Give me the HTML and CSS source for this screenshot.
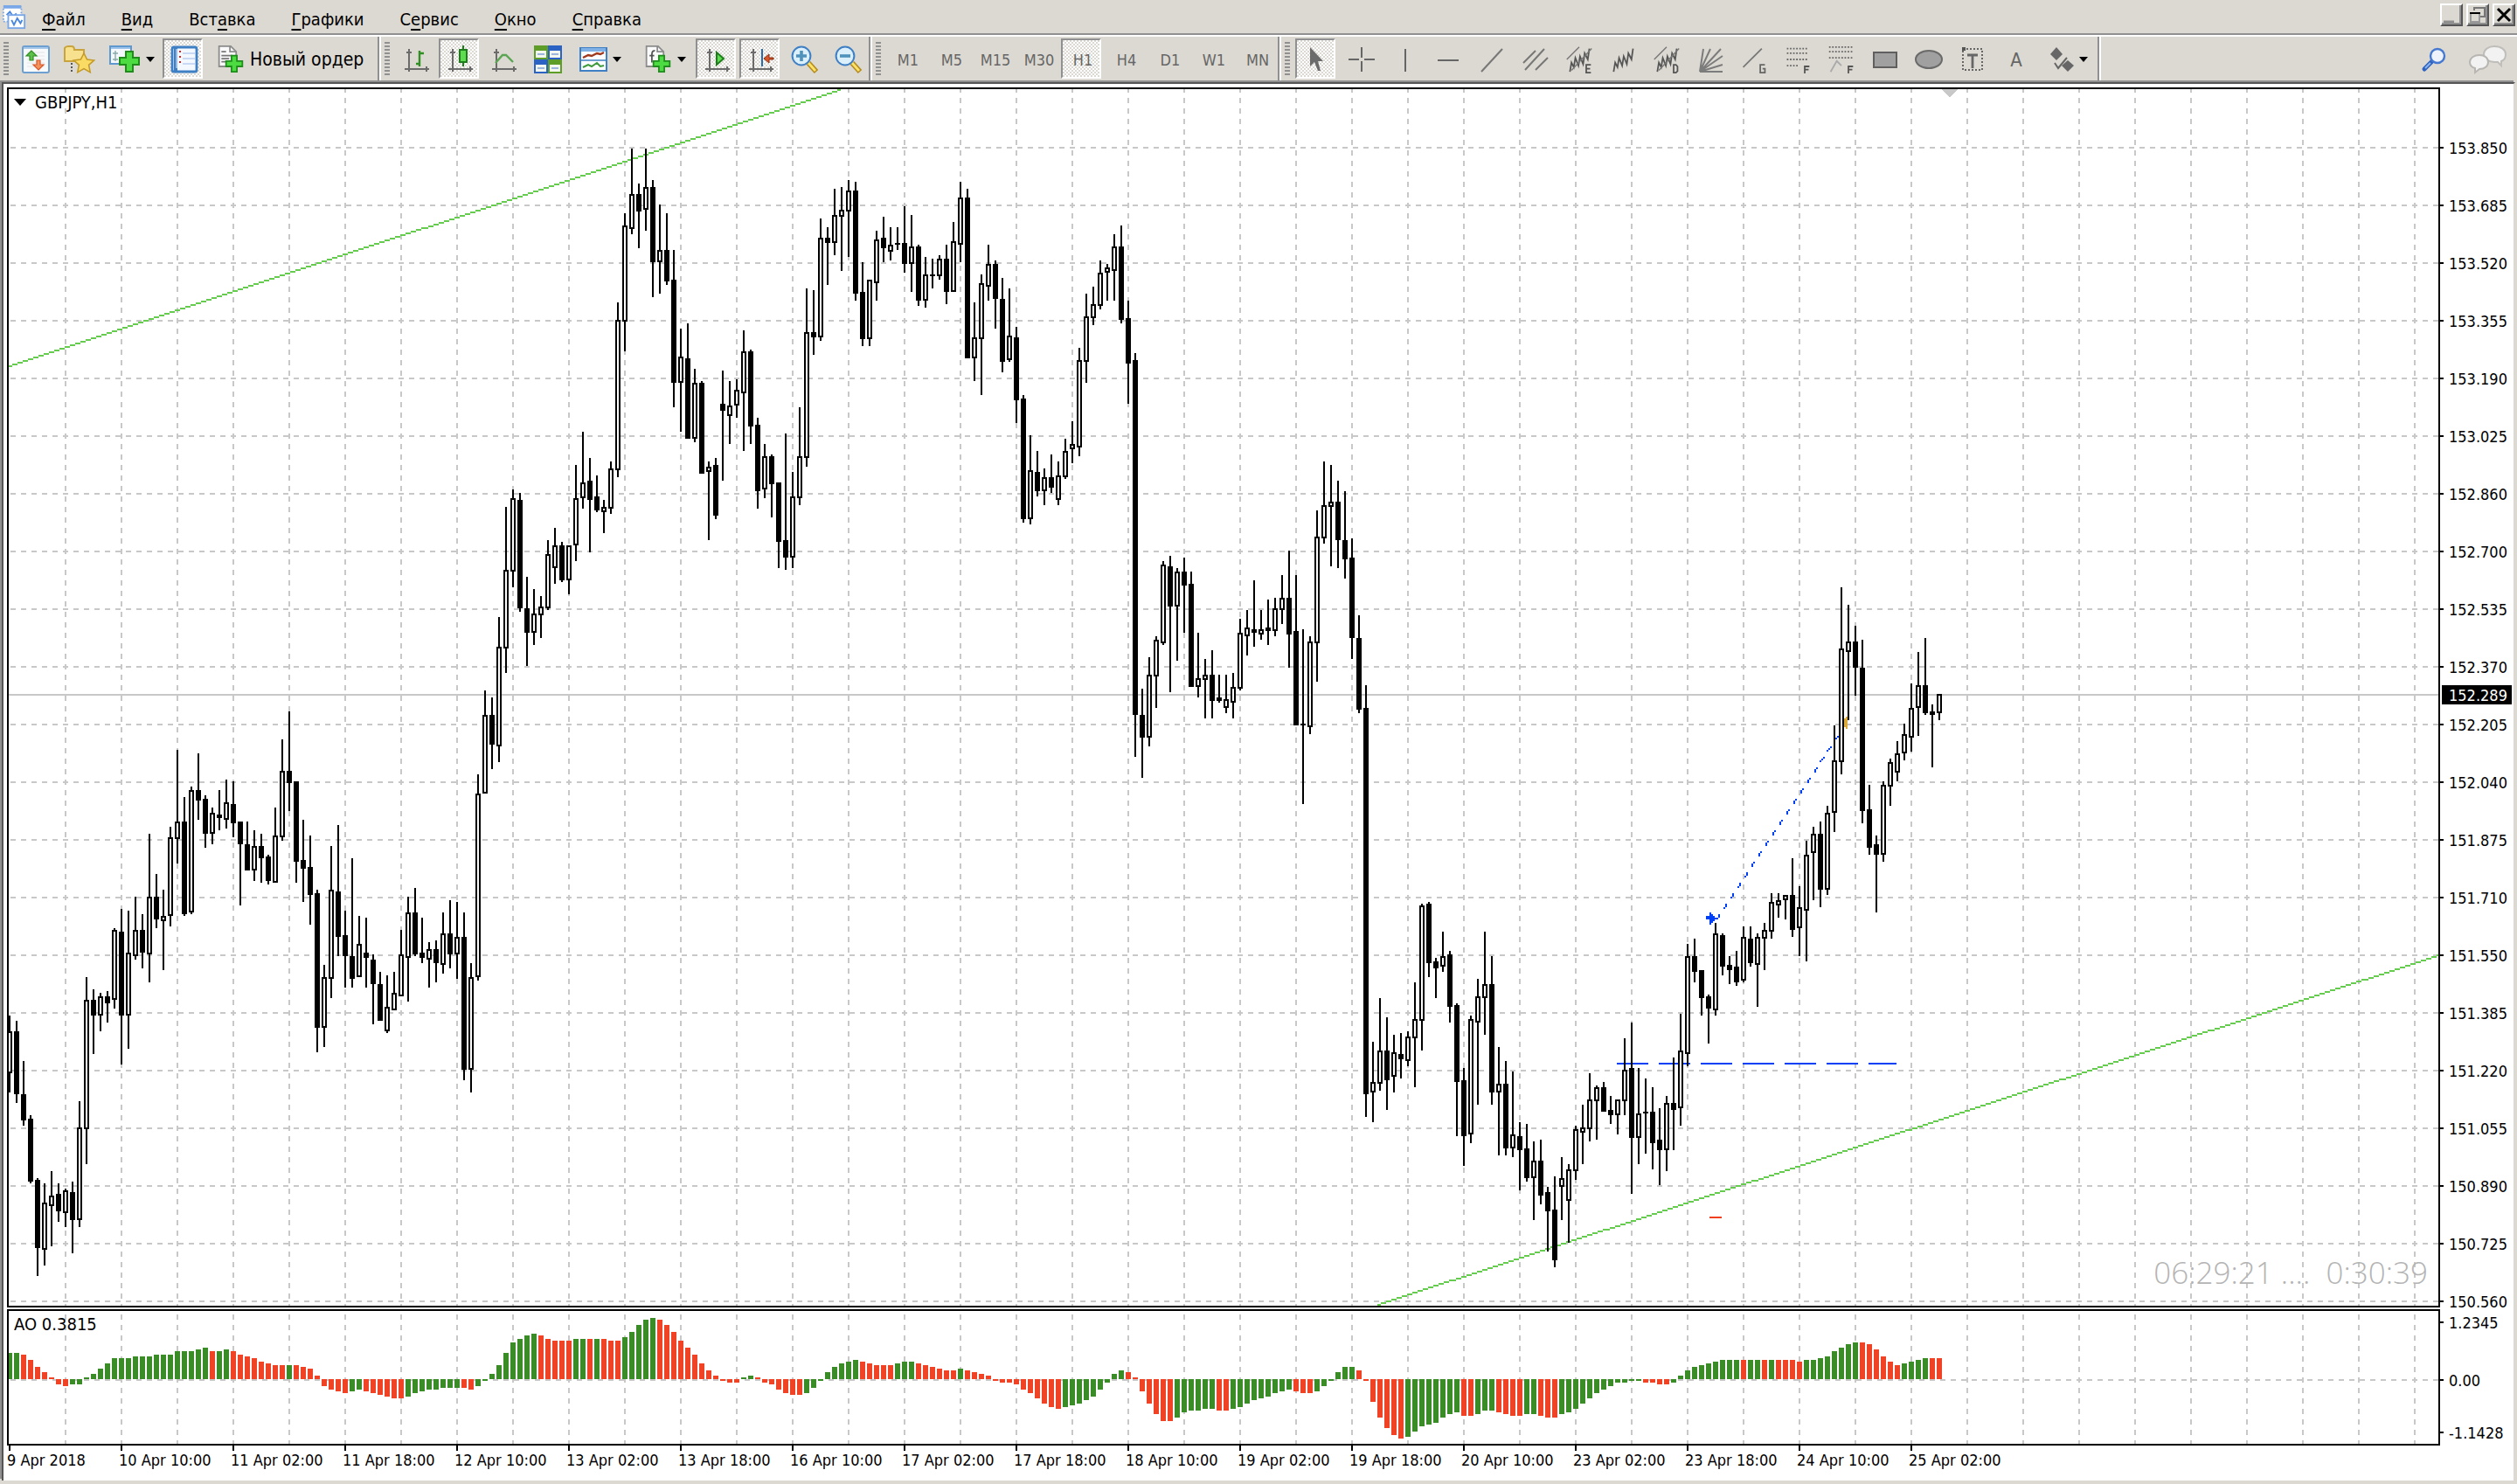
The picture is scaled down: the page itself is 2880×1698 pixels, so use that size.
FILE: index.html
```html
<!DOCTYPE html>
<html lang="ru">
<head>
    <meta charset="UTF-8">
    <meta name="viewport" content="width=device-width, initial-scale=1.0">
    <title>GBPJPY,H1</title>
    <link rel="stylesheet" href="styles.css">
</head>
<body>
    <header class="menubar">
        <svg class="app-icon" viewBox="0 0 15 15">
            <rect x="1" y="1" width="11" height="9" fill="#fff" stroke="#7aa7e8" stroke-dasharray="1 1"/>
            <path d="M1 1h11" stroke="#7aa7e8" stroke-width="2"/>
            <path d="M3 6l2-2 2 3 2-2" stroke="#4b86dd" fill="none"/>
            <rect x="4" y="6" width="10" height="8" fill="#fff" stroke="#7aa7e8"/>
            <path d="M6 9l1.500 3 2-4 2 3 1-2" stroke="#4b86dd" fill="none"/>
        </svg>
        <nav class="menu">
            <button><u>Ф</u>айл</button>
            <button><u>В</u>ид</button>
            <button>Вст<u>а</u>вка</button>
            <button><u>Г</u>рафики</button>
            <button>С<u>е</u>рвис</button>
            <button><u>О</u>кно</button>
            <button><u>С</u>правка</button>
        </nav>
        <div class="window-buttons">
            <button aria-label="Свернуть"><svg viewBox="0 0 11 11"><path d="M1 9.500h6" stroke="#8f8f8f" stroke-width="1.500"/></svg></button>
            <button aria-label="Восстановить"><svg viewBox="0 0 11 11"><path d="M3.500 3V1.500h6v5H7" stroke="#777" fill="none"/><path d="M3 1.500h7" stroke="#777"/><rect x="1.500" y="4.500" width="5" height="5" fill="#dcd9d2" stroke="#999"/><path d="M1 4.500h6" stroke="#000"/></svg></button>
            <button aria-label="Закрыть"><svg viewBox="0 0 11 11"><path d="M2 2l7 7M9 2l-7 7" stroke="#000" stroke-width="1.500"/></svg></button>
        </div>
    </header>

    <div class="toolbar">
        <div class="group">
            <span class="grip"></span>
            <button class="tool" aria-label="Новый график"><svg viewBox="0 0 16 16"><rect x=".5" y=".5" width="15" height="15" rx="1" fill="#f8f9fa" stroke="#6d9fd0"/><path d="M1 1.500h14" stroke="#a8c8ea"/><path d="M3 4h10M3 6h10M3 8h10M3 10h10M3 12h10" stroke="#e2e4e8" stroke-width=".5"/><path d="M5.500 3L2.500 6h2v2.500h2V6h2z" fill="#5fc04c" stroke="#2f8f22" stroke-width=".6"/><path d="M9.500 14l3-3h-2V8.500h-2V11h-2z" fill="#f2925c" stroke="#d8572a" stroke-width=".6"/></svg></button>
            <button class="tool" aria-label="Профили"><svg class="wide" viewBox="0 0 18 16"><path d="M.5 9V1.500Q1 .5 2.500 .5h2Q6 .5 6 2.500h5.500V9z" fill="#f7e08e" stroke="#c9a43c"/><path d="M4.500 10v6" stroke="#555" stroke-dasharray="1 1"/><path d="M11.500 4.500l1.800 3.500 4 .5-3 2.700.8 4.100-3.600-2-3.600 2 .8-4.100-3-2.700 4-.5z" fill="#fadc65" stroke="#c49a28" stroke-width=".8"/></svg></button>
            <button class="tool drop" aria-label="Добавить график"><svg class="wide" viewBox="0 0 18 16"><rect x=".5" y=".5" width="12" height="10" fill="#f4f8fc" stroke="#5f97cf"/><path d="M1 1.500h11" stroke="#9dc3ea"/><path d="M3.500 3v6M2 4.500h3M2 8h3" stroke="#8aa" stroke-width=".7"/><path d="M9.500 3.500h4v3.500h3.500v4h-3.500v4h-4v-4H6V7h3.500z" fill="#4ddb42" stroke="#1f8c1c"/></svg><i class="arrow"></i></button>
            <button class="tool pressed" aria-label="Обзор рынка"><svg viewBox="0 0 16 16"><rect x="1" y="1" width="14" height="14" rx="1" fill="#f4f8ff" stroke="#3f7fc4" stroke-width="1.400"/><path d="M3 1.500v13" stroke="#3f7fc4" stroke-width="2"/><path d="M3.500 2v11" stroke="#a9cbf0" stroke-width=".8"/><path d="M5.500 3v1M5.500 6v1M5.500 9v1" stroke="#d22"/><path d="M7 4.500h7M7 7.500h7M7 10.500h7" stroke="#b9cdf2" stroke-width=".7"/></svg></button>
            <button class="tool order"><svg viewBox="0 0 16 18"><path d="M.5 .5h7.500L11.500 4v9.500H.5z" fill="#fafafa" stroke="#8c8c8c"/><path d="M7.500 .5V4h4" fill="none" stroke="#8c8c8c"/><path d="M2 4h3M2 6.500h7M2 8.500h5M2 10.500h4" stroke="#777"/><path d="M8.500 6.500h3.500V10h3.500v3.500H12V17H8.500v-3.500H5V10h3.500z" fill="#4ddb42" stroke="#1f8c1c"/></svg>Новый ордер</button>
        </div>
        <div class="group">
            <span class="grip"></span>
            <button class="tool" aria-label="Бары"><svg viewBox="0 0 16 16"><use href="#axes"/><path d="M9.500 3v9M9.500 4.500H12M7.500 10.500h2" stroke="#2f8f22" stroke-width="1.200"/></svg></button>
            <button class="tool pressed" aria-label="Свечи"><svg viewBox="0 0 16 16"><use href="#axes"/><path d="M9.500 0v12" stroke="#1d7d1a"/><rect x="7.500" y="2.500" width="4" height="7" fill="#5ddc4f" stroke="#1d7d1a"/></svg></button>
            <button class="tool" aria-label="Линия"><svg viewBox="0 0 16 16"><use href="#axes"/><path d="M3 10l4-4.500h2l4 4" fill="none" stroke="#5aa552" stroke-width="1.200"/></svg></button>
            <button class="tool" aria-label="Окна мозаикой"><svg viewBox="0 0 16 16"><rect width="8" height="8" fill="#5e9e28"/><rect x="8" width="8" height="8" fill="#2b63c4"/><rect y="8" width="8" height="8" fill="#2b63c4"/><rect x="8" y="8" width="8" height="8" fill="#5e9e28"/><path d="M1 3h6v4H1zM9 3h6v4H9zM1 11h6v4H1zM9 11h6v4H9z" fill="#f3f7ef"/><path d="M2 5h4M10 5h4M2 13h4M10 13h4" stroke="#9bb6df" stroke-width="1"/></svg></button>
            <button class="tool drop wide-gap" aria-label="Шаблоны"><svg viewBox="0 0 16 16"><rect x=".5" y="1.500" width="15" height="13" fill="#fafcff" stroke="#3f7fc4"/><path d="M1 2.500h14" stroke="#7fb0e6" stroke-width="2"/><path d="M1 8.500h14" stroke="#6d9fd0"/><path d="M2 7l3-1.500 2 .5 3-1.500 2 .5 2-1" stroke="#a0391c" fill="none" stroke-width="1.200"/><path d="M2 12.500l3-1.500 2 1 3-2 2 2 2-.5" stroke="#3e9a3a" fill="none"/></svg><i class="arrow"></i></button>
            <button class="tool drop" aria-label="Индикаторы"><svg viewBox="0 0 16 18"><path d="M.5 .5h7.500L11.500 4v9.500H.5z" fill="#fafafa" stroke="#8c8c8c"/><path d="M7.500 .5V4h4" fill="none" stroke="#8c8c8c"/><path d="M6 3.500Q4 3 4 6v5M2.500 6.500h3" stroke="#555" fill="none"/><path d="M8.500 6.500h3.500V10h3.500v3.500H12V17H8.500v-3.500H5V10h3.500z" fill="#4ddb42" stroke="#1f8c1c"/></svg><i class="arrow"></i></button>
            <button class="tool pressed" aria-label="Автопрокрутка"><svg viewBox="0 0 16 16"><use href="#axes"/><path d="M7.500 4v7l4-3.500z" fill="#5ddc4f" stroke="#1d7d1a"/></svg></button>
            <button class="tool pressed" aria-label="Сдвиг графика"><svg viewBox="0 0 16 16"><use href="#axes"/><path d="M8.500 2v10" stroke="#2a6da8"/><path d="M9.500 7.500L12.500 5v2H15v1h-2.500v2z" fill="#d8572a" stroke="#8c2f10" stroke-width=".5"/></svg></button>
            <button class="tool" aria-label="Увеличить"><svg viewBox="0 0 16 16"><use href="#lens"/><path d="M3 6h6M6 3v6" stroke="#4f93bd" stroke-width="1.800"/></svg></button>
            <button class="tool" aria-label="Уменьшить"><svg viewBox="0 0 16 16"><use href="#lens"/><path d="M3 6h6" stroke="#4f93bd" stroke-width="1.800"/></svg></button>
        </div>
        <div class="group">
            <span class="grip"></span>
            <button class="tool">M1</button>
            <button class="tool">M5</button>
            <button class="tool">M15</button>
            <button class="tool">M30</button>
            <button class="tool pressed">H1</button>
            <button class="tool">H4</button>
            <button class="tool">D1</button>
            <button class="tool">W1</button>
            <button class="tool">MN</button>
        </div>
        <div class="group">
            <span class="grip"></span>
            <button class="tool pressed" aria-label="Курсор"><svg viewBox="0 0 16 16"><path d="M4 1v11l2.500-2.500 2 5h1.500l-1.500-5.500h3z" fill="#6b6b6b"/></svg></button>
            <button class="tool" aria-label="Перекрестие"><svg viewBox="0 0 16 16"><path d="M8.500 1v6M8.500 9v6M1 8h6M10 8h6" stroke="#666"/></svg></button>
            <button class="tool" aria-label="Вертикальная линия"><svg viewBox="0 0 16 16"><path d="M8.500 2v13" stroke="#666"/></svg></button>
            <button class="tool" aria-label="Горизонтальная линия"><svg viewBox="0 0 16 16"><path d="M2 8.500h12" stroke="#666"/></svg></button>
            <button class="tool" aria-label="Трендовая линия"><svg viewBox="0 0 16 16"><path d="M2 15L14 2" stroke="#777"/></svg></button>
            <button class="tool" aria-label="Канал"><svg viewBox="0 0 16 16"><path d="M1 10l7-7M2 14L13 2M8 14l7-7" stroke="#777"/></svg></button>
            <button class="tool" aria-label="Канал Эллиота"><svg viewBox="0 0 16 18"><use href="#zigzag"/><path d="M0 9l8-8M3 16L16 2" stroke="#777" stroke-width=".8"/><path d="M15.500 12.500h-3v5h3M12.500 15h2.500" fill="none" stroke="#555"/></svg></button>
            <button class="tool" aria-label="Стандартное отклонение"><svg viewBox="0 0 16 18"><use href="#zigzag"/></svg></button>
            <button class="tool" aria-label="Канал отклонения"><svg viewBox="0 0 16 18"><use href="#zigzag"/><path d="M0 9l8-8M3 16L16 2" stroke="#777" stroke-width=".8"/><path d="M12.500 12.500v5h1.500l1-1v-3l-1-1z" fill="none" stroke="#555"/></svg></button>
            <button class="tool" aria-label="Веер Ганна"><svg viewBox="0 0 16 16"><path d="M2 15L4 2M2 15L8 2M2 15L14 2M2 15L15 6M2 15l13-4M2 15h13" stroke="#7c7c7c"/></svg></button>
            <button class="tool" aria-label="Линия Ганна"><svg viewBox="0 0 16 18"><path d="M1 14L13 2" stroke="#777"/><path d="M15 12.500h-3v5h3V15h-1.500" fill="none" stroke="#666"/></svg></button>
            <button class="tool" aria-label="Фибоначчи"><svg viewBox="0 0 16 18"><path d="M1 2h13M1 5h13M1 9h13M1 13h8" stroke="#666" stroke-dasharray="1 1"/><path d="M15.500 13.500h-3V18M12.500 15.500h2.500" fill="none" stroke="#555"/></svg></button>
            <button class="tool" aria-label="Расширение Фибоначчи"><svg viewBox="0 0 16 18"><path d="M0 1h16M0 4h16M0 8h16" stroke="#666" stroke-dasharray="1 1"/><path d="M1 17l4-7 3 3" fill="none" stroke="#aaa"/><path d="M15.500 13.500h-3V18M12.500 15.500h2.500" fill="none" stroke="#555"/></svg></button>
            <button class="tool" aria-label="Прямоугольник"><svg viewBox="0 0 16 16"><rect x="1.500" y="4" width="13" height="8.500" fill="#a0a0a0" stroke="#5f5f5f"/></svg></button>
            <button class="tool" aria-label="Эллипс"><svg viewBox="0 0 16 16"><ellipse cx="8" cy="8" rx="7.500" ry="5" fill="#a0a0a0" stroke="#6a6a6a"/></svg></button>
            <button class="tool" aria-label="Текст"><svg viewBox="0 0 16 16"><rect x="2.500" y="2" width="11" height="12" fill="none" stroke="#666" stroke-dasharray="1 1"/><path d="M5 5.500h6M8 5v8" stroke="#666" stroke-width="1.400"/><path d="M2 1h2v2H2z" fill="#555"/></svg></button>
            <button class="tool letter" aria-label="Надпись">A</button>
            <button class="tool drop" aria-label="Стрелки"><svg class="marks" viewBox="0 0 14 16"><path d="M4 1l3.500 4-3.500 3.500L.5 5z" fill="#666"/><path d="M3 10l2 3 5-6" stroke="#666" fill="none"/><path d="M10.500 15L7 11.500l3.500-3 3.500 3z" fill="#666"/></svg><i class="arrow"></i></button>
        </div>
        <div class="extras">
            <button class="tool" aria-label="Поиск"><svg viewBox="0 0 16 16"><path d="M2.500 13.500L7 9" stroke="#2d62c0" stroke-width="2.500" stroke-linecap="round"/><path d="M3 13l3-3" stroke="#8db4ee"/><circle cx="10" cy="6" r="4" fill="#eef3fb" stroke="#4578d0" stroke-width="1.200"/></svg></button>
            <button class="tool" aria-label="Сообщения"><svg class="chat" viewBox="0 0 22 16"><path d="M14.500 .5c4 0 6.500 2 6.500 4.500 0 2-1 3.500-2.500 4v2.500L16.500 9.500h-2c-3.500 0-6-2-6-4.500s2.500-4.500 6-4.500z" fill="#f2f2f2" stroke="#c0beba"/><path d="M6 5.500c3 0 5 1.700 5 4s-2 4-5 4l-2.500 2V13C1.500 12.500 .5 11 .5 9.500c0-2.300 2.500-4 5.500-4z" fill="#f2f2f2" stroke="#b8b6b2"/></svg></button>
        </div>
    </div>

    <svg class="defs" aria-hidden="true">
        <defs>
            <g id="axes" stroke="#6b6b6b" fill="none"><path d="M3.500 2v13M1 13.500h14"/><path d="M2 4h3M13.500 12v3" /></g>
            <g id="lens"><path d="M10 10l4.500 5" stroke="#b58a1c" stroke-width="3"/><path d="M10 10l4 4.500" stroke="#fbe268" stroke-width="1.400"/><circle cx="6" cy="6" r="5.200" fill="#dcf0fc" stroke="#3f7fc4"/></g>
            <path id="zigzag" d="M2 17l1-6 1.500 3L5.500 8l2 5 1-6 2 5 1-7 2 4L14.500 2" fill="none" stroke="#555"/>
        </defs>
    </svg>

    <main class="chart">
        <div class="row">
            <div class="pane price-pane">
                <div class="symbol"><i class="arrow big"></i>GBPJPY,H1</div>
                <svg id="price"></svg>
                <div class="timer">06:29:21 ....&nbsp; 0:30:39</div>
            </div>
            <ul class="axis price-axis">
                <li>153.850</li><li>153.685</li><li>153.520</li><li>153.355</li><li>153.190</li><li>153.025</li>
                <li>152.860</li><li>152.700</li><li>152.535</li><li>152.370</li><li>152.205</li><li>152.040</li>
                <li>151.875</li><li>151.710</li><li>151.550</li><li>151.385</li><li>151.220</li><li>151.055</li>
                <li>150.890</li><li>150.725</li><li>150.560</li>
                <li class="current">152.289</li>
            </ul>
        </div>
        <div class="row">
            <div class="pane ao-pane">
                <div class="symbol">AO 0.3815</div>
                <svg id="ao"></svg>
            </div>
            <ul class="axis ao-axis"><li>1.2345</li><li>0.00</li><li>-1.1428</li></ul>
        </div>
        <ul class="dates">
            <li>9 Apr 2018</li><li>10 Apr 10:00</li><li>11 Apr 02:00</li><li>11 Apr 18:00</li><li>12 Apr 10:00</li><li>13 Apr 02:00</li>
            <li>13 Apr 18:00</li><li>16 Apr 10:00</li><li>17 Apr 02:00</li><li>17 Apr 18:00</li><li>18 Apr 10:00</li><li>19 Apr 02:00</li>
            <li>19 Apr 18:00</li><li>20 Apr 10:00</li><li>23 Apr 02:00</li><li>23 Apr 18:00</li><li>24 Apr 10:00</li><li>25 Apr 02:00</li>
        </ul>
    </main>
    <script src="chart.js"></script>
</body>
</html>
```
FILE: styles.css
```css
* {
    box-sizing: border-box;
}
body {
    margin: 0;
    min-height: 100vh;
    background: #dcd9d2;
    font-family: "DejaVu Sans Condensed", "DejaVu Sans", sans-serif;
    font-size: 20px;
    color: #000;
}
button {
    font: inherit;
    color: inherit;
    background: none;
    border: 0;
    padding: 0;
}
ul {
    list-style: none;
    margin: 0;
    padding: 0;
}
svg {
    display: block;
}
.defs {
    position: absolute;
    width: 0;
    height: 0;
}

/* menu */
.menubar {
    display: flex;
    align-items: center;
    height: 42px;
    padding: 0 2px;
    border-bottom: 2px solid #fff;
    box-shadow: inset 0 -2px #909090;
}
.app-icon {
    width: 28px;
    height: 30px;
}
.menu {
    display: flex;
    flex: 1;
}
.menu button {
    padding: 4px 21px 0 20px;
    line-height: 28px;
}
.menu button:first-child {
    padding-left: 18px;
}
.menu u {
    text-underline-offset: 4px;
    text-decoration-thickness: 2px;
}
.window-buttons {
    display: flex;
    gap: 4px;
    height: 32px;
}
.window-buttons button {
    width: 26px;
    height: 26px;
    border: 2px solid;
    border-color: #fff #555 #555 #fff;
    box-shadow: inset -2px -2px #909090;
}
.window-buttons svg {
    width: 22px;
    height: 22px;
}

/* toolbar */
.toolbar {
    display: flex;
    height: 50px;
    color: #666;
}
.group {
    display: flex;
    align-items: center;
    gap: 4px;
    padding: 0 2px 0 4px;
    border-right: 2px solid #909090;
    box-shadow: 2px 0 #fff;
    margin-right: 2px;
}
.grip {
    width: 6px;
    height: 38px;
    margin-right: 2px;
    background: repeating-linear-gradient(#909090 0 2px, transparent 2px 4px);
}
.tool {
    display: flex;
    align-items: center;
    justify-content: center;
    width: 46px;
    height: 46px;
    padding: 2px 0 0 4px;
    font-size: 18px;
}
.tool svg {
    width: 32px;
    height: 32px;
    overflow: visible;
    flex: none;
}
.tool svg.wide {
    width: 36px;
}
.tool svg.chat {
    width: 44px;
}
.tool svg.marks {
    width: 28px;
}
.drop {
    width: 66px;
    gap: 6px;
}
.wide-gap {
    margin-right: 4px;
}
.arrow {
    border: solid transparent;
    border-width: 6px 5px 0 5px;
    border-top-color: #000;
}
.arrow.big {
    border-width: 8px 7px 0 7px;
}
.pressed {
    border: 2px solid;
    border-color: #909090 #fff #fff #909090;
    background: repeating-conic-gradient(#fff 0 25%, #dcd9d2 0 50%) 0 0 / 4px 4px;
}
.order {
    justify-content: flex-start;
    width: 194px;
    padding-left: 12px;
    gap: 6px;
    color: #000;
    font-size: 21px;
    white-space: nowrap;
}
.letter {
    font-size: 22px;
}
.extras {
    display: flex;
    align-items: center;
    gap: 16px;
    margin-left: auto;
    padding-right: 12px;
}

/* chart window */
.chart {
    margin: 2px 2px 0 2px;
    padding: 4px 0 0 4px;
    background: #fff;
    border: solid #555;
    border-width: 2px 0 0 2px;
    border-right: 2px solid #dcd9d2;
    box-shadow: -2px -2px #909090;
}
.row {
    display: flex;
    margin-bottom: 2px;
}
.pane {
    position: relative;
    flex: 1;
    min-width: 0;
    border: 2px solid #000;
}
.pane > svg {
    width: 100%;
}
.price-pane > svg {
    height: 1392px;
}
.ao-pane > svg {
    height: 152px;
}
.symbol {
    position: absolute;
    top: 3px;
    left: 6px;
    display: flex;
    align-items: center;
    gap: 10px;
    font-size: 20px;
    line-height: 24px;
}
.timer {
    position: absolute;
    right: 12px;
    bottom: 18px;
    font: 35px/40px "Open Sans", sans-serif;
    font-weight: 300;
    color: #b4b4b4;
}
.axis {
    position: relative;
    width: 84px;
    font-size: 18px;
}
.price-axis {
    height: 1396px;
    padding-top: 36px;
}
.axis li {
    display: flex;
    align-items: center;
    gap: 6px;
    height: 66px;
}
.axis li::before {
    content: "";
    width: 4px;
    height: 2px;
    background: #000;
}
.axis .current {
    position: absolute;
    top: 684px;
    left: 2px;
    width: 80px;
    height: 22px;
    padding-left: 8px;
    background: #000;
    color: #fff;
}
.axis .current::before {
    display: none;
}
.ao-axis {
    padding-top: 4px;
}
.ao-axis li {
    height: 22px;
    margin-bottom: 44px;
}
.ao-axis li:nth-child(2) {
    margin-bottom: 38px;
}
.ao-axis li:last-child {
    margin-bottom: 0;
}
.dates {
    display: flex;
    height: 40px;
    margin-top: -2px;
    font-size: 18px;
}
.dates li {
    flex: none;
    width: 128px;
    padding-top: 6px;
    line-height: 22px;
    white-space: nowrap;
    background: linear-gradient(#000, #000) 2px 0 / 2px 6px no-repeat;
}
```
FILE: chart.js
```js
// one unit is two screen pixels; the panes start at column 5 of the window
const UNIT = 2;
const LEFT = 5;
const STEP = 4;

// high, body top, body bottom, low (rows from the top), u = rising bar
const candles = `
581 590 614 625u;584 590 626 631;607 626 641 644;638 640 676 677;674 675 714 730;677 688 715 724u;670 684 690 713u;677 683 693 699;
680 681 694 702u;676 682 698 717;630 645 698 702u;559 572 646 666u;566 572 581 603;568 570 581 590u;567 570 574 585;531 532 572 577u;
520 533 581 609;521 545 581 600u;513 532 547 549u;523 532 545 554;477 513 546 562u;500 513 526 531;509 524 527 555u;473 479 524 530u;
429 470 480 494u;456 470 523 524;450 452 522 523u;431 452 458 469;455 457 477 485;462 465 477 483u;452 466 468 475;446 459 469 474u;
447 460 471 479;470 470 483 518;470 483 498 498;475 484 498 504u;477 484 491 505;489 490 504 506;462 478 505 505u;423 441 479 481u;
407 441 448 464;447 447 493 505;469 492 497 516;478 496 512 529;509 511 588 602;552 559 588 599u;484 509 560 571u;472 510 536 547;
521 535 547 565;491 547 560 565;524 540 559 559u;525 545 548 565;546 549 563 586;556 563 584 584;558 576 590 591u;556 568 578 578u;
532 546 570 570u;513 522 548 573u;508 522 546 547;525 545 548 551;539 543 549 565u;538 543 551 562;522 534 552 557u;515 534 546 554;
516 536 546 560u;522 536 612 618;551 559 612 625u;443 454 559 561u;395 409 454 454u;399 409 426 440;353 370 427 436u;290 326 371 385u;
280 285 327 336u;282 286 348 350;330 348 362 381;337 351 362 369u;341 347 352 365u;309 317 348 349u;302 312 325 334u;310 312 332 333;
312 312 332 340u;266 285 312 321u;247 276 285 291u;262 275 286 316;272 284 292 293;286 290 293 305u;264 268 291 294u;173 183 269 273u;
122 129 184 201u;85 111 131 134u;105 111 121 142;85 107 120 132u;103 107 150 170;117 143 150 168u;122 143 161 163;143 160 219 233;
188 204 219 247u;185 205 251 251;211 219 251 253u;218 219 271 271;264 267 270 309u;262 266 295 297;212 231 235 275;218 232 238 254u;
217 223 232 239u;189 201 225 258u;200 201 244 254;239 243 281 291;254 261 280 285u;260 261 277 296;276 276 310 325;248 309 319 326;
270 284 319 325u;233 261 285 289u;165 190 262 267u;166 190 193 203;125 136 193 195u;130 136 139 163;108 123 139 146u;107 120 124 155u;
103 109 121 147u;104 109 168 172;150 167 194 198;160 160 194 198u;132 137 162 172u;124 136 142 150;130 140 144 149u;130 139 140 143;
118 139 151 156;123 141 151 167u;140 141 172 175;147 157 172 176u;148 157 158 165;146 148 158 160u;140 148 167 174;127 138 167 167u;
104 113 140 150u;108 113 205 205;173 193 205 218u;157 162 194 226u;140 151 164 172u;149 151 171 188;159 171 207 213;165 192 206 207u;
187 193 229 242;226 228 297 299;249 269 297 300u;258 270 281 284;268 273 281 289u;260 273 279 282;264 272 286 289u;251 258 273 274u;
241 254 257 265u;199 206 256 261u;168 181 207 219u;164 174 182 186u;149 156 175 177u;151 153 156 172u;134 141 155 172u;129 141 183 185;
172 182 208 231;202 206 409 433;394 409 422 445;376 386 422 427u;364 366 387 405u;321 323 368 369u;318 324 347 396;325 327 347 378u;
319 327 335 362;327 334 393 393;362 388 393 399u;377 386 389 411u;372 386 401 411;386 399 401 402;386 400 405 408u;385 393 402 411u;
354 362 394 395u;349 359 364 375u;332 360 362 370;349 360 363 366u;343 359 361 369;342 348 361 364u;329 342 349 357u;315 342 363 382;
329 361 415 415;360 414 415 460;364 367 416 420u;292 307 368 390u;264 289 308 311u;266 287 290 324u;275 287 309 325;281 309 320 331;
308 319 365 377;352 365 406 408;392 405 626 639;596 619 625 642u;571 601 620 624u;582 601 618 635;592 602 616 625u;591 603 606 617;
590 593 607 610u;562 583 594 622u;517 518 584 601u;516 517 551 559;548 550 554 571;533 547 553 556u;544 546 576 585;574 575 619 650;
611 618 650 667;581 583 649 654u;560 570 585 632u;533 563 571 592u;547 563 625 632;599 620 625 661u;607 620 657 661;613 649 657 662u;
642 650 658 681;643 657 674 676;653 664 674 698u;652 664 684 689;679 682 693 716;673 692 721 725;662 674 679 698u;666 669 687 711u;
644 646 670 675u;632 645 648 666u;614 629 646 653u;621 622 630 652u;619 622 636 636;627 635 638 643;629 629 638 649u;594 612 630 638u;
585 611 651 683;611 637 651 666u;617 636 637 660;622 636 654 669;634 652 658 678;627 631 658 670u;605 631 635 658;580 601 634 644u;
540 547 603 610u;537 547 556 562;555 555 571 581;569 570 577 597;528 534 578 581u;534 535 553 558;547 552 555 563;544 553 562 564;
530 536 561 562u;530 537 551 553;534 536 552 576u;528 532 537 555u;511 516 533 537u;511 515 518 525u;512 512 515 526u;491 512 532 536;
507 519 531 547u;481 489 521 550u;473 477 488 515u;470 477 509 519;461 465 509 512u;415 435 465 476u;336 371 436 443u;346 367 373 412u;
358 367 382 398;366 382 464 471;449 463 485 489;478 483 489 522;447 449 489 493u;434 436 450 461u;424 431 442 447u;414 420 431 435u;
391 405 422 430u;373 392 405 421u;365 392 408 409;403 407 409 439;397 397 408 412u`;

// Awesome Oscillator bars; g / r only where the colour flips on an equal value
const oscillator = `
15g 15 14 11 7 4 1 -3 -4 -3 -3 1 3 6 9 12 12 12 13 13 13 14 14 14 16 16 16 17 18 16 16g 17 16 14 13 12 10 9 8 8
8g 8r 7 6 2 -4 -6 -7 -8 -7 -6 -7 -8 -9 -10 -11 -11 -10 -8 -7 -6 -6 -5 -5 -5 -5r -6 -4 -1 3 8 15 21 23 25 26 25 23 22 22
22 23 23 23r 23g 23r 22 22 24 27 31 34 35 34 31 27 22 18 14 9 5 2 -1 -2 -2 1 2 1 -2 -3 -6 -8 -9 -9 -8 -5 -1 4 7 9
10 11 10 9 8 8 8 9 10 10 9 8 7 6 5 5 6 5 4 3 2 -1 -2 -2 -3 -6 -8 -11 -14 -16 -17 -16 -15 -14 -12 -10 -6 -2 3 5
4 1 -7 -14 -20 -24 -24 -22 -19 -18 -18 -17 -17 -18 -18 -17 -16 -14 -12 -11 -10 -8 -7 -6 -7 -8 -8 -7 -4 -1 4 7 7 5 -1 -13 -22 -28 -32 -34
-33 -30 -27 -26 -25 -22 -20 -19 -21 -21 -20 -18 -18 -19 -20 -21 -21 -20 -20 -21 -22 -22 -20 -19 -17 -14 -11 -8 -6 -4 -2 -2 -1 -1 -2 -2 -3 -3 -2 2
5 7 8 9 10 11 11 11 11r 11g 11 11r 11g 11r 11 11 10 11 11 12 13 16 18 20 21 21r 20 17 13 10 8 9 10 11 12 12r 12`;

const GRID = '#c8c8c8';

function rect(x, y, w, h, fill) {
    return `<rect x="${x}" y="${y}" width="${w}" height="${h}" fill="${fill}"/>`;
}

// stepped line without smoothing; on/off give the dash length in steps
function steps(x1, y1, x2, y2, color, on = 1, off = 0) {
    const n = Math.max(Math.abs(x2 - x1), Math.abs(y2 - y1));
    let d = '';
    for (let i = 0; i <= n; i++) {
        if (i % (on + off) >= on) continue;
        const x = Math.round(x1 + (x2 - x1) * i / n);
        const y = Math.round(y1 + (y2 - y1) * i / n);
        d += `M${x} ${y}h1v1h-1z`;
    }
    return `<path d="${d}" fill="${color}"/>`;
}

function grid(cols, top, bottom, rows) {
    let d = '';
    for (let x = 37; x < cols; x += 32) {
        d += `M${x}.5 ${top - (top - 50) % 6}V${bottom}`;
    }
    rows.forEach(y => d += `M6 ${y}.5H${cols}`);
    return `<path d="${d}" stroke="${GRID}" stroke-dasharray="3 3" fill="none"/>`;
}

function paint(svg, top, body) {
    svg.innerHTML = `<g shape-rendering="crispEdges" transform="scale(${UNIT}) translate(${-LEFT} ${-top})">${body}</g>`;
}

function drawPrice() {
    const svg = document.getElementById('price');
    const cols = LEFT + svg.clientWidth / UNIT;
    const rows = [];
    for (let y = 84; y < 747; y += 33) rows.push(y);

    let out = grid(cols, 51, 747, rows);
    out += rect(5, 397, cols, 1, GRID);
    out += `<path d="M1111 51h9l-4.500 5z" fill="${GRID}"/>`;
    // channel
    out += steps(5, 209, 480, 51, '#66cc50');
    out += steps(788, 746, 1395, 546, '#66cc50');
    // stop and target levels
    for (let x = 925; x < 1085; x += 24) out += rect(x, 608, Math.min(18, 1085 - x), 1, '#0040f5');
    out += rect(978, 696, 7, 1, '#f04020');
    out += steps(982, 525, 1056, 413, '#0040f5', 3, 3);
    out += '<path d="M976 524h2v-2h1v1h1v1h1v1h1v1h-1v1h-1v1h-1v1h-1v-3h-2z" fill="#0040f5"/>';

    candles.trim().split(';').forEach((bar, i) => {
        const up = bar.endsWith('u');
        const [high, top, bottom, low] = bar.replace('u', '').trim().split(' ').map(Number);
        const x = LEFT + i * STEP;
        out += rect(x, high, 1, low - high, '#000');
        out += rect(x - 1, top, 3, bottom - top, '#000');
        if (up) out += rect(x, top + 1, 1, bottom - top - 2, '#fff');
    });
    out += '<path d="M1057 410v7h-1v-1h-1v-5h1v-1z" fill="#dca93c"/>';
    paint(svg, 51, out);
}

function drawOscillator() {
    const svg = document.getElementById('ao');
    const cols = LEFT + svg.clientWidth / UNIT;
    let out = grid(cols, 750, 826, [789]);
    let prev = 0;
    let color = 'g';
    oscillator.trim().split(/\s+/).forEach((token, i) => {
        const v = parseInt(token);
        if (/[gr]$/.test(token)) color = token.slice(-1);
        else if (v !== prev) color = v > prev ? 'g' : 'r';
        prev = v;
        out += rect(LEFT + i * STEP - 1, v > 0 ? 789 - v : 789, 3, Math.abs(v), color === 'g' ? '#3a8c26' : '#f04224');
    });
    paint(svg, 750, out);
}

function draw() {
    drawPrice();
    drawOscillator();
}

draw();
window.addEventListener('resize', draw);
```
